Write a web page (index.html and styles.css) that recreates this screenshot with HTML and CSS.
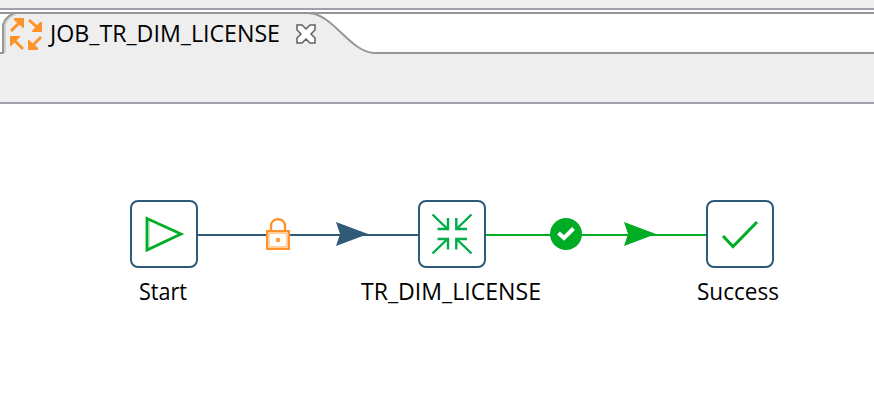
FILE: index.html
```html
<!DOCTYPE html>
<html lang="en">
<head>
<meta charset="utf-8">
<title>JOB_TR_DIM_LICENSE</title>
<link rel="stylesheet" href="styles.css">
</head>
<body>
<div class="editor">
  <div class="topbar"></div>
  <div class="tabstrip">
    <svg class="tab-shape" viewBox="0 0 874 42" width="874" height="42">
      <path fill="#eee" d="M5 42V14C5 7 10 2 15 1H308C333 1 350 41 375 41H874V42Z"/>
      <path fill="none" stroke="#d0d0d0" stroke-width="2" d="M5 41V13Q7 5 16 2"/>
      <path fill="none" stroke="#969696" stroke-width="2" d="M0 1H874M3 41V13L5 8L9 4L14 1M0 41H4M308 1C333 1 350 41 375 41H874"/>
    </svg>
    <div class="tab">
      <svg class="job-icon" viewBox="0 0 34 34" width="34" height="34">
        <g fill="#ff9329" stroke="#ff9329">
          <path stroke="none" d="M5 1H15V11H14L5 3ZM33 5V15H23V14L31 5ZM1 19H11V20L2 29H1ZM19 23H20L29 31V33H19Z"/>
          <path fill="none" stroke-width="3" d="M2 14L11 5M20 3L29 11M4 22L14 32M32 20L23 29"/>
        </g>
      </svg>
      <svg class="tab-title" width="242" height="34"><text x="1" y="25" textLength="230" lengthAdjust="spacingAndGlyphs">JOB_TR_DIM_LICENSE</text></svg>
      <svg class="close" viewBox="0 0 20 20" width="20" height="20">
        <path fill="#fff" stroke="#606060" stroke-width="1.5" d="M1 1H6L10 5L14 1H19V6L15 10L19 14V19H14L10 15L6 19H1V14L5 10L1 6Z"/>
      </svg>
    </div>
  </div>
  <div class="toolbar"></div>
  <div class="canvas">
    <svg class="links" viewBox="0 104 874 296" width="874" height="296">
      <path stroke="#2f5a78" stroke-width="2" d="M198 235H266M290 235H418"/>
      <path stroke="#00ac23" stroke-width="2" d="M486 235H706"/>
      <path fill="#2f5a78" d="M336 222L368 234L336 246L340 234Z"/>
      <path fill="#00ac23" d="M624 222L656 234L624 246L628 234Z"/>
      <path fill="none" stroke="#ff9329" stroke-width="2.4" d="M271 230V226C271 217 285 217 285 226V230"/>
      <rect x="267" y="231" width="22" height="18" fill="#fff" stroke="#ff9329" stroke-width="2"/>
      <rect x="269" y="233" width="18" height="14" fill="none" stroke="#ffcf9a" stroke-width="2"/>
      <rect x="276" y="238" width="4" height="4" fill="#ffa043"/>
      <circle cx="566" cy="234" r="16" fill="#00ac23"/>
      <path fill="none" stroke="#fff" stroke-width="4" d="M558.5 233L564 238L573.5 228.5"/>
    </svg>
    <div class="node start">
      <svg viewBox="0 0 64 64" width="64" height="64"><path fill="none" stroke="#00ac23" stroke-width="2.8" d="M15 16.500L49 32L15 48Z"/><path stroke="#7fd590" d="M17 19V45"/></svg>
    </div>
    <div class="node job">
      <svg viewBox="0 0 64 64" width="64" height="64"><path fill="none" stroke="#00ad49" stroke-width="2.4" d="M12.500 12.500L27.500 27M28 16V27H17.500M51.500 12.500L36.500 27M36.300 16V27H47M12.500 51.500L27.500 37M17.500 37H28V47.500M51.500 51.500L36.500 37M47 37H36.300V47.500"/></svg>
    </div>
    <div class="node success">
      <svg viewBox="0 0 64 64" width="64" height="64"><path fill="none" stroke="#00ac23" stroke-width="3" d="M15 34L25 44.500L49 20"/></svg>
    </div>
    <svg class="labels" viewBox="0 104 874 296" width="874" height="296">
      <text x="139" y="300" textLength="48" lengthAdjust="spacingAndGlyphs">Start</text>
      <text x="361" y="300" textLength="180" lengthAdjust="spacingAndGlyphs">TR_DIM_LICENSE</text>
      <text x="697" y="300" textLength="82" lengthAdjust="spacingAndGlyphs">Success</text>
    </svg>
  </div>
</div>
</body>
</html>
```
FILE: styles.css
```css
* { box-sizing: border-box; }
body { margin: 0; background: #fff; font-family: "Open Sans", "Noto Sans", sans-serif; }
svg { display: block; overflow: visible; }
text { font-size: 24px; fill: #000; }
.editor { width: 874px; height: 400px; overflow: hidden; display: flex; flex-direction: column; }
.topbar { height: 10px; background: #eee; border-bottom: 2px solid #9fa3a9; }
.tabstrip { position: relative; height: 42px; margin-top: 2px; background: #fff; }
.tab-shape { position: absolute; inset: 0; }
.tab { position: relative; display: flex; align-items: flex-start; padding: 5px 0 0 9px; }
.job-icon { margin-right: 6px; }
.close { margin: 7px 0 0 5px; }
.toolbar { height: 50px; background: #eee; border-bottom: 2px solid #9fa3a9; }
.canvas { position: relative; flex: 1; background: #fff; }
.links, .labels { position: absolute; left: 0; top: 0; }
.node { position: absolute; top: 96px; width: 68px; height: 68px; border: 2px solid #2f5a78; border-radius: 8px; background: #fff; }
.start { left: 130px; }
.job { left: 418px; }
.success { left: 706px; }
```
